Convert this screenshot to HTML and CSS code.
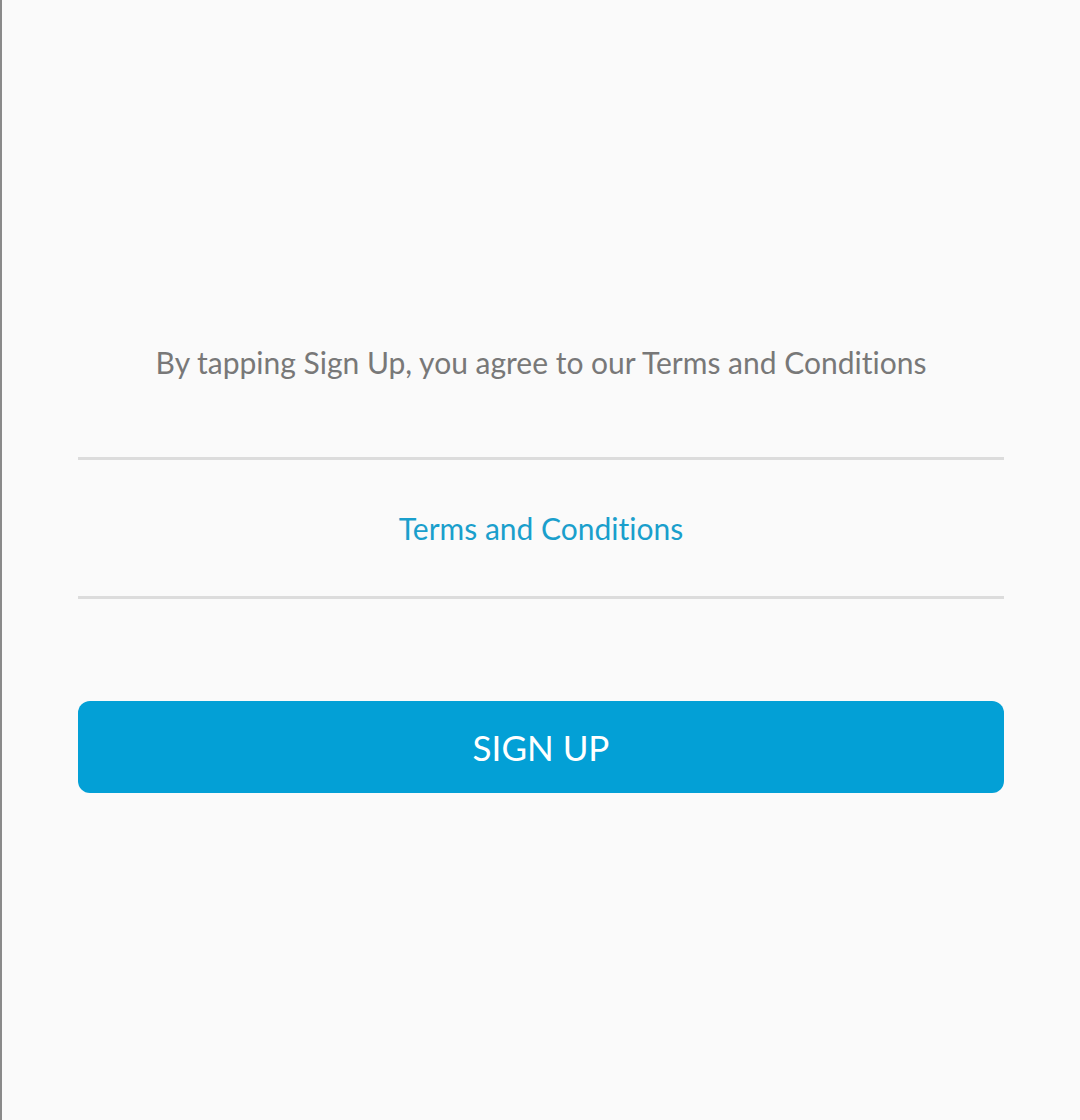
FILE: index.html
```html
<!DOCTYPE html>
<html>
<head>
<meta charset="utf-8">
<link rel="stylesheet" href="styles.css">
</head>
<body>
<div class="screen">
  <p class="agree">By tapping Sign Up, you agree to our Terms and Conditions</p>
  <div class="terms-row"><a class="terms">Terms and Conditions</a></div>
  <button class="signup">SIGN UP</button>
</div>
</body>
</html>
```
FILE: styles.css
```css
html, body {
  margin: 0;
  padding: 0;
  background: #fafafa;
}
body {
  font-family: Lato, "Noto Sans", sans-serif;
  font-variant-ligatures: none;
  height: 1120px;
  border-left: 2px solid #8a8a8a;
  box-sizing: border-box;
}
.screen {
  display: flex;
  flex-direction: column;
  padding: 0 76px 0 76px;
}
.agree {
  margin: 342px 0 0 0;
  text-align: center;
  font-size: 30px;
  line-height: 40px;
  color: #787878;
}
.terms-row {
  margin-top: 75px;
  height: 136px;
  border-top: 3px solid #dcdcdc;
  border-bottom: 3px solid #dcdcdc;
  display: flex;
  align-items: center;
  justify-content: center;
}
.terms {
  font-size: 30px;
  color: #1a9fcc;
}
.signup {
  margin-top: 102px;
  height: 92px;
  border: none;
  border-radius: 12px;
  background: #03a0d6;
  color: #ffffff;
  font-family: Lato, "Noto Sans", sans-serif;
  font-variant-ligatures: none;
  font-size: 35px;
}
```
